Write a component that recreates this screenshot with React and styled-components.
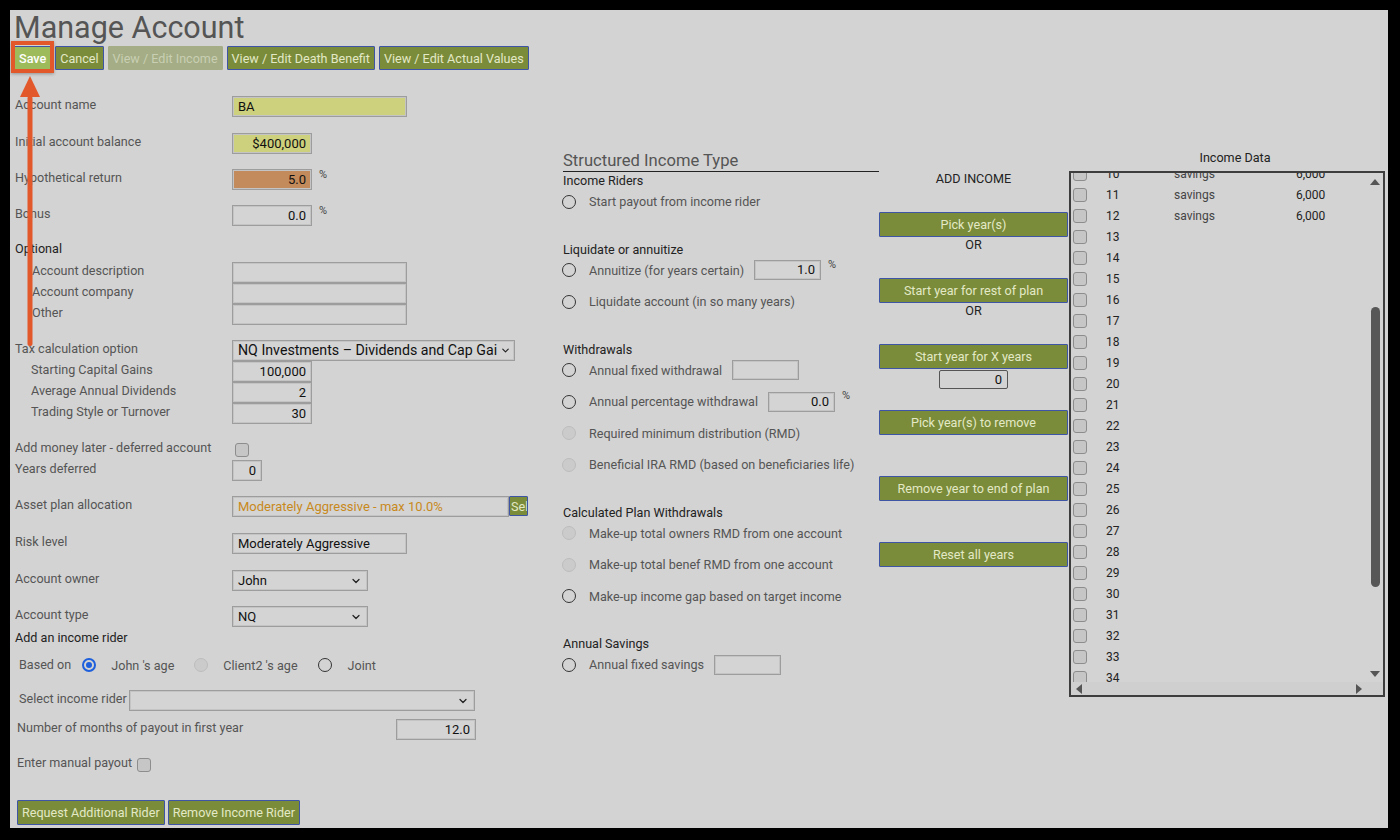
import React from "react";
import styled, { createGlobalStyle } from "styled-components";
import { ChevronDown } from "lucide-react";

const GlobalStyle = createGlobalStyle`
  html, body { margin: 0; padding: 0; background: #000; }
  body { font-family: Roboto, "Liberation Sans", sans-serif; }
  * { box-sizing: border-box; }
`;

const Page = styled.div`
  position: relative;
  margin: 10px 0 0 10px;
  width: 1378px;
  height: 818px;
  background: #d3d3d3;
  padding: 0 4px;
  overflow: hidden;
`;

const Title = styled.h1`
  margin: 0;
  font-size: 30.5px;
  line-height: 36px;
  font-weight: 400;
  color: #555;
`;

const TopBar = styled.div`
  display: flex;
  gap: 4px;
`;

const Btn = styled.button`
  position: relative;
  height: ${(p) => p.$h || 24}px;
  padding: 0 4px;
  font-family: Roboto, "Liberation Sans", sans-serif;
  font-size: 12.6px;
  font-weight: ${(p) => (p.$save ? 500 : 400)};
  white-space: nowrap;
  border: 1px solid ${(p) => (p.$disabled ? "#a4ad85" : "#3e55a6")};
  background: ${(p) => (p.$save ? "#9dbb5b" : p.$disabled ? "#a4ad85" : "#7a8b3a")};
  color: ${(p) => (p.$save ? "#fff" : p.$disabled ? "#c9cfb3" : "#e3e9c6")};
  border-radius: 1px;
  ${(p) =>
    p.$save &&
    `&::after {
      content: "";
      position: absolute;
      top: -6px; left: -4px; right: -4px; bottom: -4px;
      border: 4px solid #e3582b;
      box-shadow: 0 1px 3px rgba(0,0,0,0.3);
    }`}
`;

const SelButton = styled(Btn)`
  width: 19px;
  padding: 0 1px;
  overflow: hidden;
`;

const WideButton = styled(Btn)`
  width: 100%;
`;

const Main = styled.div`
  display: flex;
  align-items: flex-start;
  margin-top: 26px;
`;

const LeftCol = styled.div`
  width: 549px;
  flex-shrink: 0;
`;

const Row = styled.div`
  display: flex;
  align-items: ${(p) => (p.$center ? "center" : "flex-start")};
  height: ${(p) => p.$h || 21}px;
  margin-top: ${(p) => p.$mt || 0}px;
  padding-left: ${(p) => p.$pl || 0}px;
`;

const Label = styled.div`
  width: ${(p) => (p.$w ? `${p.$w}px` : "auto")};
  flex-shrink: 0;
  padding-left: ${(p) => (p.$indent || 0) + 1}px;
  font-size: 12.6px;
  line-height: 18px;
  color: ${(p) => (p.$dark ? "#222" : "#555")};
  white-space: nowrap;
`;

const Field = styled.div`
  width: ${(p) => p.$w}px;
  height: ${(p) => p.$h || 21}px;
  flex-shrink: 0;
  margin-left: ${(p) => p.$ml || 0}px;
  border: 1px solid #9d9d9d;
  box-shadow: inset 0 0 0 1px #c4c4c4;
  background: ${(p) => p.$bg || "#d4d4d4"};
  color: ${(p) => p.$color || "#111"};
  font-size: 13px;
  line-height: ${(p) => (p.$h || 21) - 2}px;
  padding: 0 5px;
  text-align: ${(p) => p.$align || "left"};
  white-space: nowrap;
  overflow: hidden;
`;

const SelectBox = styled(Field)`
  display: flex;
  align-items: center;
  justify-content: space-between;
  gap: 3px;
  padding: 0 5px 0 5px;
  font-size: ${(p) => p.$fs || 13}px;
  color: #111;
  svg {
    flex-shrink: 0;
  }
`;

const Pct = styled.span`
  font-size: 11px;
  line-height: 14px;
  color: #444;
  margin-left: 7px;
  margin-top: -1px;
  align-self: flex-start;
`;

const Check = styled.span`
  display: inline-block;
  width: 14px;
  height: 14px;
  flex-shrink: 0;
  border: 1.5px solid #8d8d8d;
  border-radius: 3px;
  background: #c6c6c6;
  margin-left: ${(p) => p.$ml || 0}px;
  margin-top: ${(p) => p.$mt || 0}px;
`;

const Radio = styled.span`
  position: relative;
  display: inline-block;
  width: 14px;
  height: 14px;
  flex-shrink: 0;
  border-radius: 50%;
  margin-left: ${(p) => p.$ml || 0}px;
  border: ${(p) =>
    p.$checked ? "2px solid #1d5fdc" : p.$disabled ? "1px solid #bdbdbd" : "1.5px solid #333"};
  background: ${(p) => (p.$disabled ? "#cbcbcb" : "transparent")};
  ${(p) =>
    p.$checked &&
    `&::after {
      content: "";
      position: absolute;
      top: 2px; left: 2px; width: 6px; height: 6px;
      border-radius: 50%;
      background: #1d5fdc;
    }`}
`;

const RadioText = styled.span`
  font-size: 12.6px;
  color: #555;
  margin-left: ${(p) => p.$ml || 13}px;
  white-space: nowrap;
`;

const BottomBar = styled.div`
  display: flex;
  gap: 3px;
  margin-top: 25px;
  padding-left: 3px;
`;

/* middle column */
const MidCol = styled.div`
  width: 316px;
  flex-shrink: 0;
  margin-top: 55px;
`;

const MidHeading = styled.div`
  font-size: 16.6px;
  line-height: 20px;
  color: #555;
  border-bottom: 1px solid #222;
`;

const Section = styled.div`
  margin-top: ${(p) => p.$mt || 0}px;
`;

const SectionTitle = styled.div`
  font-size: 12.6px;
  line-height: 18px;
  color: #222;
`;

const OptionList = styled.div`
  display: flex;
  flex-direction: column;
  gap: 8.5px;
`;

const Option = styled.div`
  display: flex;
  align-items: center;
  height: 23px;
  margin-left: -1px;
`;

/* right action column */
const ActionCol = styled.div`
  width: 189px;
  flex-shrink: 0;
  margin-top: 74px;
`;

const AddTitle = styled.div`
  text-align: center;
  font-size: 12.6px;
  line-height: 18px;
  color: #222;
  margin-bottom: 24px;
`;

const Block = styled.div`
  height: 66px;
  display: flex;
  flex-direction: column;
  align-items: center;
`;

const Or = styled.div`
  font-size: 12.6px;
  line-height: 16px;
  color: #222;
`;

const SmallInput = styled.div`
  width: 69px;
  height: 19px;
  margin-top: 1px;
  border: 1px solid #555;
  border-radius: 2px;
  font-size: 13px;
  line-height: 17px;
  text-align: right;
  padding: 0 5px;
  color: #111;
`;

/* income data */
const DataCol = styled.div`
  width: 316px;
  flex-shrink: 0;
  margin-left: 1px;
  margin-top: 53px;
`;

const DataTitle = styled.div`
  text-align: center;
  padding-left: 16px;
  font-size: 12.6px;
  line-height: 18px;
  color: #222;
  margin-bottom: 4px;
`;

const DataBox = styled.div`
  height: 526px;
  border: 2px solid #3d3d3d;
  display: grid;
  grid-template-columns: 1fr 16px;
  grid-template-rows: 1fr 13px;
`;

const RowsArea = styled.div`
  overflow: hidden;
`;

const RowsList = styled.div`
  margin-top: -10px;
`;

const DataRow = styled.div`
  display: flex;
  align-items: center;
  height: 21px;
  padding-left: 2px;
  font-size: 12px;
  color: #222;
`;

const Cell = styled.span`
  width: ${(p) => p.$w}px;
  flex-shrink: 0;
  color: ${(p) => p.$color || "#222"};
`;

const VScroll = styled.div`
  display: flex;
  flex-direction: column;
  align-items: center;
  padding: 6px 0 5px;
`;

const Tri = styled.span`
  width: 0;
  height: 0;
  border-left: ${(p) => (p.$dir === "right" ? "6px solid #555" : p.$dir === "left" ? "none" : "5px solid transparent")};
  border-right: ${(p) => (p.$dir === "left" ? "6px solid #555" : p.$dir === "right" ? "none" : "5px solid transparent")};
  border-top: ${(p) => (p.$dir === "down" ? "6px solid #555" : p.$dir === "up" ? "none" : "5px solid transparent")};
  border-bottom: ${(p) => (p.$dir === "up" ? "6px solid #555" : p.$dir === "down" ? "none" : "5px solid transparent")};
`;

const Thumb = styled.div`
  width: 9px;
  height: 280px;
  margin-top: 122px;
  border-radius: 4.5px;
  background: #575757;
`;

const Spacer = styled.div`
  flex: 1;
`;

const HScroll = styled.div`
  grid-column: 1 / span 2;
  display: flex;
  align-items: center;
  justify-content: space-between;
  padding: 0 21px 0 5px;
  background: #cfcfcf;
`;

const ArrowOverlay = styled.svg`
  position: absolute;
  left: 8px;
  top: 66px;
`;

const sections = [
  {
    title: "Income Riders",
    options: [{ text: "Start payout from income rider" }],
  },
  {
    title: "Liquidate or annuitize",
    options: [
      { text: "Annuitize (for years certain)", input: "1.0", pct: true },
      { text: "Liquidate account (in so many years)" },
    ],
  },
  {
    title: "Withdrawals",
    options: [
      { text: "Annual fixed withdrawal", input: "" },
      { text: "Annual percentage withdrawal", input: "0.0", pct: true },
      { text: "Required minimum distribution (RMD)", disabled: true },
      { text: "Beneficial IRA RMD (based on beneficiaries life)", disabled: true },
    ],
  },
  {
    title: "Calculated Plan Withdrawals",
    options: [
      { text: "Make-up total owners RMD from one account", disabled: true },
      { text: "Make-up total benef RMD from one account", disabled: true },
      { text: "Make-up income gap based on target income" },
    ],
  },
  {
    title: "Annual Savings",
    options: [{ text: "Annual fixed savings", input: "" }],
  },
];

const actions = [
  { label: "Pick year(s)", extra: "or" },
  { label: "Start year for rest of plan", extra: "or" },
  { label: "Start year for X years", extra: "input" },
  { label: "Pick year(s) to remove" },
  { label: "Remove year to end of plan" },
  { label: "Reset all years" },
];

const years = Array.from({ length: 25 }, (_, i) => i + 10);

const Chev = ({ size = 12 }) => <ChevronDown size={size} strokeWidth={2.5} color="#222" />;

export default function App() {
  return (
    <>
      <GlobalStyle />
      <Page>
        <Title>Manage Account</Title>
        <TopBar>
          <Btn $save>Save</Btn>
          <Btn>Cancel</Btn>
          <Btn $disabled>View / Edit Income</Btn>
          <Btn>View / Edit Death Benefit</Btn>
          <Btn>View / Edit Actual Values</Btn>
        </TopBar>

        <Main>
          <LeftCol>
            <Row>
              <Label $w={218}>Account name</Label>
              <Field $w={175} $bg="#cdd07c">BA</Field>
            </Row>
            <Row $mt={16}>
              <Label $w={218}>Initial account balance</Label>
              <Field $w={80} $bg="#cdd07c" $align="right">$400,000</Field>
            </Row>
            <Row $mt={15}>
              <Label $w={218}>Hypothetical return</Label>
              <Field $w={80} $bg="#c38b5b" $align="right">5.0</Field>
              <Pct>%</Pct>
            </Row>
            <Row $mt={15}>
              <Label $w={218}>Bonus</Label>
              <Field $w={80} $align="right">0.0</Field>
              <Pct>%</Pct>
            </Row>
            <Row $mt={14}>
              <Label $w={218} $dark>Optional</Label>
            </Row>
            <Row $mt={1}>
              <Label $w={218} $indent={17}>Account description</Label>
              <Field $w={175} />
            </Row>
            <Row>
              <Label $w={218} $indent={17}>Account company</Label>
              <Field $w={175} />
            </Row>
            <Row>
              <Label $w={218} $indent={17}>Other</Label>
              <Field $w={175} />
            </Row>
            <Row $mt={15}>
              <Label $w={218}>Tax calculation option</Label>
              <SelectBox $w={283} $fs={14.2}>
                <span>NQ Investments – Dividends and Cap Gai</span>
                <Chev size={11} />
              </SelectBox>
            </Row>
            <Row>
              <Label $w={218} $indent={16}>Starting Capital Gains</Label>
              <Field $w={80} $align="right">100,000</Field>
            </Row>
            <Row>
              <Label $w={218} $indent={16}>Average Annual Dividends</Label>
              <Field $w={80} $align="right">2</Field>
            </Row>
            <Row>
              <Label $w={218} $indent={16}>Trading Style or Turnover</Label>
              <Field $w={80} $align="right">30</Field>
            </Row>
            <Row $mt={15}>
              <Label $w={218}>Add money later - deferred account</Label>
              <Check $ml={3} $mt={4} />
            </Row>
            <Row>
              <Label $w={218}>Years deferred</Label>
              <Field $w={30} $align="right">0</Field>
            </Row>
            <Row $mt={15}>
              <Label $w={218}>Asset plan allocation</Label>
              <Field $w={277} $color="#c8891c">Moderately Aggressive - max 10.0%</Field>
              <SelButton $h={20}>Sel</SelButton>
            </Row>
            <Row $mt={16}>
              <Label $w={218}>Risk level</Label>
              <Field $w={175}>Moderately Aggressive</Field>
            </Row>
            <Row $mt={16}>
              <Label $w={218}>Account owner</Label>
              <SelectBox $w={136}>
                <span>John</span>
                <Chev />
              </SelectBox>
            </Row>
            <Row $mt={15}>
              <Label $w={218}>Account type</Label>
              <SelectBox $w={136}>
                <span>NQ</span>
                <Chev />
              </SelectBox>
            </Row>
            <Row $mt={2} $h={18}>
              <Label $dark>Add an income rider</Label>
            </Row>
            <Row $mt={8} $h={20} $center $pl={4}>
              <Label>Based on</Label>
              <Radio $checked $ml={11} />
              <RadioText $ml={15}>John 's age</RadioText>
              <Radio $disabled $ml={20} />
              <RadioText $ml={15}>Client2 's age</RadioText>
              <Radio $ml={20} />
              <RadioText $ml={16}>Joint</RadioText>
            </Row>
            <Row $mt={15} $pl={4}>
              <Label>Select income rider</Label>
              <SelectBox $w={346} $ml={2}>
                <span />
                <Chev />
              </SelectBox>
            </Row>
            <Row $mt={8} $pl={2}>
              <Label $w={380}>Number of months of payout in first year</Label>
              <Field $w={80} $align="right">12.0</Field>
            </Row>
            <Row $mt={14} $pl={2}>
              <Label>Enter manual payout</Label>
              <Check $ml={5} $mt={4} />
            </Row>
            <BottomBar>
              <Btn $h={25}>Request Additional Rider</Btn>
              <Btn $h={25}>Remove Income Rider</Btn>
            </BottomBar>
          </LeftCol>

          <MidCol>
            <MidHeading>Structured Income Type</MidHeading>
            {sections.map((s, i) => (
              <Section key={s.title} $mt={i === 0 ? 0 : 27.5}>
                <SectionTitle>{s.title}</SectionTitle>
                <OptionList>
                  {s.options.map((o) => (
                    <Option key={o.text}>
                      <Radio $disabled={o.disabled} />
                      <RadioText>{o.text}</RadioText>
                      {o.input !== undefined && (
                        <Field $w={67} $h={20} $ml={10} $align="right">
                          {o.input}
                        </Field>
                      )}
                      {o.pct && <Pct>%</Pct>}
                    </Option>
                  ))}
                </OptionList>
              </Section>
            ))}
          </MidCol>

          <ActionCol>
            <AddTitle>ADD INCOME</AddTitle>
            {actions.map((a) => (
              <Block key={a.label}>
                <WideButton $h={25}>{a.label}</WideButton>
                {a.extra === "or" && <Or>OR</Or>}
                {a.extra === "input" && <SmallInput>0</SmallInput>}
              </Block>
            ))}
          </ActionCol>

          <DataCol>
            <DataTitle>Income Data</DataTitle>
            <DataBox>
              <RowsArea>
                <RowsList>
                  {years.map((y) => (
                    <DataRow key={y}>
                      <Check />
                      <Cell $w={19} />
                      <Cell $w={68}>{y}</Cell>
                      <Cell $w={122} $color="#444">{y <= 12 ? "savings" : ""}</Cell>
                      <Cell $w={50}>{y <= 12 ? "6,000" : ""}</Cell>
                    </DataRow>
                  ))}
                </RowsList>
              </RowsArea>
              <VScroll>
                <Tri $dir="up" />
                <Thumb />
                <Spacer />
                <Tri $dir="down" />
              </VScroll>
              <HScroll>
                <Tri $dir="left" />
                <Tri $dir="right" />
              </HScroll>
            </DataBox>
          </DataCol>
        </Main>

        <ArrowOverlay width="24" height="272" viewBox="0 0 24 272">
          <polygon points="12,0 22,21 2,21" fill="#e3582b" />
          <rect x="9.5" y="20" width="5" height="250" rx="2" fill="#e3582b" />
        </ArrowOverlay>
      </Page>
    </>
  );
}
